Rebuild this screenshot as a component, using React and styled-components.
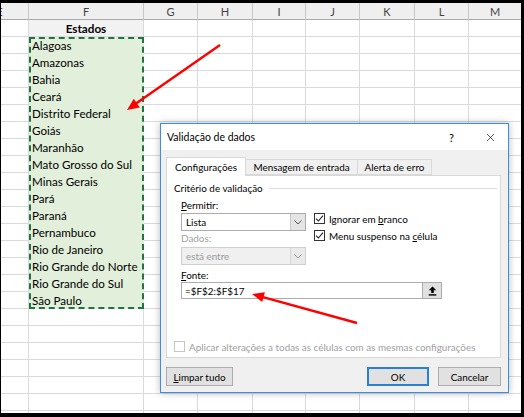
import React from "react";
import styled, { createGlobalStyle } from "styled-components";
import { X } from "lucide-react";

const GlobalStyle = createGlobalStyle`
  html, body {
    margin: 0;
    padding: 0;
    background: #000;
  }
  body {
    width: 524px;
    height: 417px;
    overflow: hidden;
  }
`;

const Frame = styled.div`
  position: relative;
  width: 524px;
  height: 417px;
  box-sizing: border-box;
  border-style: solid;
  border-color: #000;
  border-width: 3px 3px 4px 1px;
  background: #fff;
  overflow: hidden;
`;

const Sheet = styled.div`
  display: grid;
  grid-template-columns: 58px 115px 54px 55px 53px 54px 55px 54px 53px;
  grid-auto-rows: 17px;
  margin-left: -30px;
  font-family: Lato, "Liberation Sans", sans-serif;
`;

const HeadCell = styled.div`
  box-sizing: border-box;
  display: flex;
  align-items: center;
  justify-content: center;
  background: #efefef;
  border-right: 1px solid #c8c8c8;
  border-bottom: 1px solid #a9a9a9;
  font-size: 11px;
  color: #444;
`;

const Cell = styled.div`
  box-sizing: border-box;
  display: flex;
  align-items: center;
  justify-content: ${(p) => (p.$title ? "center" : "flex-start")};
  border-right: 1px solid #dadada;
  border-bottom: 1px solid #dadada;
  background: ${(p) => (p.$title ? "#f2f2f2" : "#fff")};
  font-size: 11.7px;
  font-weight: ${(p) => (p.$title ? 700 : 400)};
  color: #000;
`;

const Range = styled.div`
  grid-column: 2;
  grid-row: 3 / span 16;
  display: flex;
  flex-direction: column;
  background: #e2efda;
  outline: 2px dashed #217346;
  outline-offset: -2px;
`;

const RangeItem = styled.div`
  height: 17px;
  display: flex;
  align-items: center;
  padding-left: 3px;
  font-size: 11.6px;
  color: #000;
`;

const Dialog = styled.div`
  position: absolute;
  left: 159px;
  top: 120px;
  width: 349px;
  height: 270px;
  box-sizing: border-box;
  border: 1px solid #3d8ee2;
  background: #f0f0f0;
  box-shadow: 0 0 7px rgba(0, 0, 0, 0.28);
  display: flex;
  flex-direction: column;
  font-family: Lato, "Liberation Sans", sans-serif;
  font-size: 9.9px;
  color: #000;
`;

const TitleBar = styled.div`
  height: 26px;
  background: #fff;
  display: flex;
  align-items: center;
  padding: 0 11px 0 6px;
  font-size: 10.5px;
`;

const Title = styled.span`
  flex: 1;
`;

const Help = styled.span`
  margin-right: 30px;
  font-size: 11px;
`;

const Body = styled.div`
  flex: 1;
  display: flex;
  flex-direction: column;
  padding: 7px 7px 6px 5px;
`;

const Tabs = styled.div`
  display: flex;
  align-items: flex-end;
  height: 18px;
`;

const Tab = styled.div`
  box-sizing: border-box;
  width: ${(p) => p.$w}px;
  height: ${(p) => (p.$active ? 19 : 16)}px;
  margin-bottom: ${(p) => (p.$active ? -1 : 0)}px;
  display: flex;
  align-items: center;
  justify-content: center;
  background: ${(p) => (p.$active ? "#fff" : "#f0f0f0")};
  border: 1px solid #d9d9d9;
  border-bottom: ${(p) => (p.$active ? "none" : "1px solid #d9d9d9")};
  margin-left: ${(p) => (p.$active ? 0 : -1)}px;
  position: relative;
  z-index: ${(p) => (p.$active ? 1 : 0)};
`;

const Panel = styled.div`
  box-sizing: border-box;
  height: 183px;
  background: #fff;
  border: 1px solid #d9d9d9;
  display: flex;
  flex-direction: column;
  padding: 5px 3px 0 7px;
`;

const Legend = styled.div`
  display: flex;
  align-items: center;
  gap: 6px;
  height: 14px;
  &::after {
    content: "";
    flex: 1;
    height: 1px;
    background: #dcdcdc;
  }
`;

const Fields = styled.div`
  display: grid;
  grid-template-columns: 125px 1fr;
  column-gap: 8px;
  padding-left: 7px;
  margin-top: 3px;
`;

const Label = styled.div`
  grid-column: 1;
  height: 14px;
  line-height: 14px;
  color: ${(p) => (p.$disabled ? "#a0a0a0" : "#000")};
  margin-top: ${(p) => p.$mt || 0}px;
`;

const Select = styled.div`
  grid-column: 1;
  box-sizing: border-box;
  height: 18px;
  margin-top: ${(p) => p.$mt || 0}px;
  display: flex;
  align-items: stretch;
  border: 1px solid ${(p) => (p.$disabled ? "#cfcfcf" : "#acacac")};
  background: ${(p) => (p.$disabled ? "#f0f0f0" : "#fff")};
  color: ${(p) => (p.$disabled ? "#9a9a9a" : "#000")};
`;

const SelectText = styled.span`
  flex: 1;
  display: flex;
  align-items: center;
  padding-left: 4px;
`;

const SelectArrow = styled.span`
  width: 14px;
  display: flex;
  align-items: center;
  justify-content: center;
  background: ${(p) => (p.$disabled ? "#eaeaea" : "#e5e5e5")};
  border-left: 1px solid ${(p) => (p.$disabled ? "#d5d5d5" : "#c9c9c9")};
`;

const Checks = styled.div`
  grid-column: 2;
  grid-row: 2 / span 3;
  display: flex;
  flex-direction: column;
  margin-top: -2px;
`;

const CheckRow = styled.div`
  height: 17px;
  display: flex;
  align-items: center;
  gap: 4px;
  color: ${(p) => (p.$disabled ? "#a0a0a0" : "#000")};
`;

const Box = styled.span`
  box-sizing: border-box;
  width: 11px;
  height: 11px;
  display: flex;
  align-items: center;
  justify-content: center;
  background: #fff;
  border: 1px solid ${(p) => (p.$disabled ? "#c6c6c6" : "#333")};
`;

const Input = styled.div`
  grid-column: 1 / span 2;
  box-sizing: border-box;
  width: 261px;
  height: 17px;
  display: flex;
  align-items: stretch;
  border: 1px solid #acacac;
  background: #fff;
`;

const InputText = styled.span`
  flex: 1;
  display: flex;
  align-items: center;
  padding-left: 3px;
`;

const PickButton = styled.span`
  width: 18px;
  display: flex;
  align-items: center;
  justify-content: center;
  background: #e1e1e1;
  border-left: 1px solid #adadad;
`;

const ApplyRow = styled(CheckRow)`
  margin-top: 39px;
`;

const Buttons = styled.div`
  display: flex;
  align-items: center;
  margin-top: 9px;
  gap: 9px;
`;

const Button = styled.div`
  box-sizing: border-box;
  width: ${(p) => p.$w}px;
  height: 19px;
  display: flex;
  align-items: center;
  justify-content: center;
  background: #e1e1e1;
  border: ${(p) => (p.$primary ? "2px solid #2b7fd4" : "1px solid #adadad")};
  margin-left: ${(p) => (p.$push ? "auto" : 0)};
`;

const Arrows = styled.svg`
  position: absolute;
  left: -1px;
  top: -3px;
  width: 524px;
  height: 417px;
  pointer-events: none;
`;

const COLS = ["E", "F", "G", "H", "I", "J", "K", "L", "M"];
const STATES = [
  "Alagoas",
  "Amazonas",
  "Bahia",
  "Ceará",
  "Distrito Federal",
  "Goiás",
  "Maranhão",
  "Mato Grosso do Sul",
  "Minas Gerais",
  "Pará",
  "Paraná",
  "Pernambuco",
  "Rio de Janeiro",
  "Rio Grande do Norte",
  "Rio Grande do Sul",
  "São Paulo",
];
const ROWS = 24;

const Tick = () => (
  <svg width="9" height="9" viewBox="0 0 9 9">
    <polyline points="1,4.6 3.4,7 8,1.6" fill="none" stroke="#222" strokeWidth="1.1" />
  </svg>
);

const Chevron = ({ color }) => (
  <svg width="8" height="5" viewBox="0 0 8 5">
    <polyline points="0.5,0.5 4,4 7.5,0.5" fill="none" stroke={color} strokeWidth="1" />
  </svg>
);

const PickIcon = () => (
  <svg width="9" height="10" viewBox="0 0 9 10">
    <polygon points="4.5,0.5 8.3,4.3 5.8,4.3 5.8,7 3.2,7 3.2,4.3 0.7,4.3" fill="#000" />
    <rect x="0.7" y="8.2" width="7.6" height="1.4" fill="#000" />
  </svg>
);

function SheetGrid() {
  const cells = [];
  for (let r = 1; r <= ROWS; r++) {
    COLS.forEach((c, i) => {
      if (i === 1 && r >= 2 && r <= 17) return;
      const title = i === 1 && r === 1;
      cells.push(
        <Cell key={`${c}${r}`} $title={title}>
          {title ? "Estados" : null}
        </Cell>
      );
    });
  }
  return (
    <Sheet>
      {COLS.map((c) => (
        <HeadCell key={c}>{c}</HeadCell>
      ))}
      <Range>
        {STATES.map((s) => (
          <RangeItem key={s}>{s}</RangeItem>
        ))}
      </Range>
      {cells}
    </Sheet>
  );
}

function ValidationDialog() {
  return (
    <Dialog>
      <TitleBar>
        <Title>Validação de dados</Title>
        <Help>?</Help>
        <X size={13} strokeWidth={1.2} />
      </TitleBar>
      <Body>
        <Tabs>
          <Tab $active $w={80}>Configurações</Tab>
          <Tab $w={113}>Mensagem de entrada</Tab>
          <Tab $w={75}>Alerta de erro</Tab>
        </Tabs>
        <Panel>
          <Legend>Critério de validação</Legend>
          <Fields>
            <Label>
              <u>P</u>ermitir:
            </Label>
            <Select $mt={1}>
              <SelectText>Lista</SelectText>
              <SelectArrow>
                <Chevron color="#555" />
              </SelectArrow>
            </Select>
            <Checks>
              <CheckRow>
                <Box>
                  <Tick />
                </Box>
                <span>
                  Ignorar em <u>b</u>ranco
                </span>
              </CheckRow>
              <CheckRow>
                <Box>
                  <Tick />
                </Box>
                <span>
                  Menu suspenso na <u>c</u>élula
                </span>
              </CheckRow>
            </Checks>
            <Label $disabled>Dados:</Label>
            <Select $disabled $mt={2}>
              <SelectText>está entre</SelectText>
              <SelectArrow $disabled>
                <Chevron color="#999" />
              </SelectArrow>
            </Select>
            <Label $mt={3}>
              <u>F</u>onte:
            </Label>
            <Input>
              <InputText>=$F$2:$F$17</InputText>
              <PickButton>
                <PickIcon />
              </PickButton>
            </Input>
          </Fields>
          <ApplyRow $disabled>
            <Box $disabled />
            <span>Aplicar alterações a todas as células com as mesmas configurações</span>
          </ApplyRow>
        </Panel>
        <Buttons>
          <Button $w={67}>
            <span>
              <u>L</u>impar tudo
            </span>
          </Button>
          <Button $w={62} $primary $push>
            OK
          </Button>
          <Button $w={63}>Cancelar</Button>
        </Buttons>
      </Body>
    </Dialog>
  );
}

export default function App() {
  return (
    <>
      <GlobalStyle />
      <Frame>
        <SheetGrid />
        <ValidationDialog />
        <Arrows viewBox="0 0 524 417">
          <line x1="220" y1="45" x2="136" y2="103.5" stroke="#f00" strokeWidth="2.4" />
          <polygon points="127,110 139.8,107.4 133.8,98.8" fill="#f00" />
          <line x1="357" y1="323" x2="263" y2="297.2" stroke="#f00" strokeWidth="2.4" />
          <polygon points="252,294 264.9,292.2 262.2,302" fill="#f00" />
        </Arrows>
      </Frame>
    </>
  );
}
